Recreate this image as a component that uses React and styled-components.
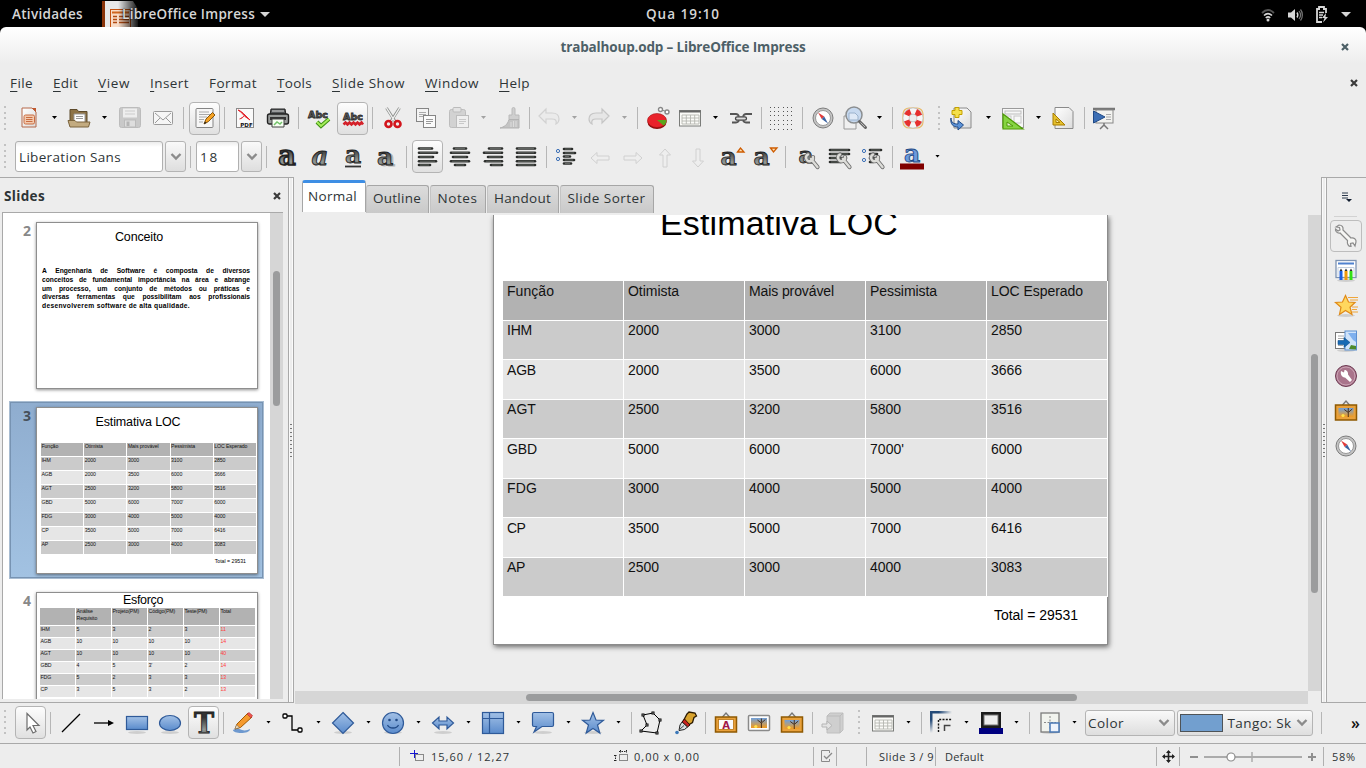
import React, { useLayoutEffect, useRef, useState } from "react";
import styled, { createGlobalStyle, css } from "styled-components";

const UI = '"Open Sans", "Noto Sans", sans-serif';
const DOC = '"Liberation Sans", Arial, sans-serif';
const INK = "#2e3436";
const LINE = "#a9a9a9";

const Global = createGlobalStyle`
  * { box-sizing: border-box; }
  html, body { margin: 0; padding: 0; background: #000; }
  body { font-family: ${UI}; color: ${INK}; overflow: hidden; }
  svg { overflow: visible; }
`;

/* ---------- text tracked to a given width ---------- */
const FitSpan = styled.span`
  display: inline-block;
  white-space: nowrap;
  flex: none;
`;

function Fit({ w, children, className }) {
  const ref = useRef(null);
  const [spacing, setSpacing] = useState(0);
  useLayoutEffect(() => {
    const el = ref.current;
    const n = el.textContent.length;
    setSpacing((w - el.getBoundingClientRect().width) / n);
  }, [w]);
  return (
    <FitSpan ref={ref} className={className} style={{ letterSpacing: `${spacing}px` }}>
      {children}
    </FitSpan>
  );
}

/* ---------- shell ---------- */
const Screen = styled.div`
  width: 1366px;
  height: 768px;
  display: flex;
  flex-direction: column;
  background: #000;
  overflow: hidden;
`;

const TopBar = styled.header`
  height: 27px;
  flex: none;
  display: grid;
  grid-template-columns: 1fr auto 1fr;
  align-items: center;
  color: #d6d6d6;
  font-size: 13.5px;
  font-weight: 600;
  line-height: 29px;
`;
const TopLeft = styled.div`
  display: flex;
  align-items: center;
  padding-left: 12px;
  height: 27px;
`;
const AppIcon = styled.svg`
  margin-left: 19px;
  margin-right: -18px;
  flex: none;
  overflow: hidden;
`;
const AppName = styled(Fit)`
  text-shadow: 0 0 2px #000;
`;
const TopRight = styled.div`
  display: flex;
  justify-content: flex-end;
  align-items: center;
  gap: 12px;
  padding-right: 15px;
`;
const DownMark = styled.i`
  width: 0;
  height: 0;
  border: 5px solid transparent;
  border-top-color: #d6d6d6;
  border-bottom: 0;
  margin-left: ${(p) => p.$ml || 0}px;
`;

const Window = styled.div`
  flex: 1;
  display: flex;
  flex-direction: column;
  min-height: 0;
  background: linear-gradient(#ffffff 0, #ededed 37px);
  border-radius: 6px 6px 0 0;
`;
const TitleBar = styled.div`
  height: 40px;
  flex: none;
  display: grid;
  grid-template-columns: 1fr auto 1fr;
  align-items: center;
  font-size: 13.5px;
  font-weight: 700;
  color: #4d6067;
`;
const CloseCell = styled.div`
  display: flex;
  flex: 1;
  justify-content: flex-end;
  padding-right: ${(p) => p.$pr}px;
`;
const MenuBar = styled.nav`
  height: 33px;
  flex: none;
  display: flex;
  align-items: center;
  padding: 0 0 2px 10px;
  gap: 20px;
  font-size: 13.5px;
  u {
    text-decoration: underline;
    text-underline-offset: 3px;
    text-decoration-thickness: 1px;
  }
`;

/* ---------- toolbars ---------- */
const Toolbar = styled.div`
  height: ${(p) => p.$h}px;
  flex: none;
  display: flex;
  align-items: center;
  padding: 0 0 ${(p) => p.$pb || 0}px 4px;
`;
const Slot = styled.span`
  flex: none;
  width: ${(p) => p.$w || 24}px;
  height: 32px;
  margin-left: ${(p) => p.$g || 0}px;
  display: flex;
  align-items: center;
  justify-content: center;
`;
const PressedSlot = styled(Slot)`
  width: 31px;
  height: 33px;
  border: 1px solid #b4b4b4;
  border-radius: 4px;
  background: linear-gradient(#fdfdfd, #e0e0e0);
`;
const Divider = styled.i`
  flex: none;
  width: 1px;
  height: 22px;
  margin-left: ${(p) => p.$g}px;
  background: #b6b6b6;
`;
const Grip = styled.i`
  flex: none;
  width: 2px;
  height: 25px;
  margin-left: ${(p) => p.$g || 0}px;
  background: repeating-linear-gradient(#c2c2c2 0 2px, transparent 2px 5.6px);
`;
const Caret = styled.i`
  flex: none;
  width: 5px;
  height: 3px;
  margin-left: ${(p) => p.$g + 1}px;
  margin-top: -1px;
  background: ${(p) => (p.$off ? "#a2a2a2" : "#000")};
  clip-path: polygon(0 0, 100% 0, 50% 100%);
`;
const Entry = styled.div`
  flex: none;
  width: ${(p) => p.$w}px;
  height: 31px;
  margin-left: ${(p) => p.$g}px;
  padding-left: 3px;
  padding-top: 1px;
  display: flex;
  align-items: center;
  border: 1px solid #b0b0b0;
  border-radius: 3px;
  background: linear-gradient(#ececec, #fff 5px);
  font-size: 13.5px;
`;
const Combo = styled.div`
  flex: none;
  width: ${(p) => p.$w}px;
  height: ${(p) => p.$h || 31}px;
  margin-left: ${(p) => p.$g}px;
  padding: 0 4px 0 ${(p) => (p.$center ? 4 : 2)}px;
  display: flex;
  align-items: center;
  justify-content: ${(p) => (p.$center ? "center" : "space-between")};
  border: 1px solid #b4b4b4;
  border-radius: 3px;
  background: linear-gradient(#f9f9f9, #dedede);
  font-size: 13.5px;
`;
const Swatch = styled.i`
  width: 43px;
  height: 18px;
  border: 1px solid #4e5357;
  background: #729fcf;
`;
const More = styled.span`
  margin-left: 29px;
  font-size: 16px;
  line-height: 20px;
  font-weight: 600;
  color: #111;
`;

/* ---------- main ---------- */
const Main = styled.div`
  flex: 1;
  display: flex;
  min-height: 0;
`;
const SlidePanel = styled.aside`
  width: 294px;
  height: 526px;
  display: flex;
  border-top: 1px solid ${LINE};
  border-bottom: 1px solid ${LINE};
`;
const PanelBody = styled.div`
  width: 288px;
  display: flex;
  flex-direction: column;
`;
const PanelHead = styled.div`
  height: 34px;
  display: flex;
  align-items: center;
  justify-content: space-between;
  padding: 2px 7px 0 4px;
  font-size: 13.5px;
  font-weight: 700;
`;
const ListFrame = styled.div`
  width: 281px;
  height: 487px;
  margin-left: 2px;
  display: flex;
  overflow: hidden;
  border-top: 1px solid ${LINE};
  border-left: 1px solid ${LINE};
  background: #fff;
`;
const List = styled.div`
  width: 267px;
  padding: 3px 0 0 6px;
  display: flex;
  flex-direction: column;
  gap: 7px;
  overflow: hidden;
`;
const Track = styled.div`
  width: 13px;
  flex: none;
  padding: ${(p) => p.$top}px 3px 0;
  background: #d6d6d6;
`;
const Thumb = styled.i`
  display: block;
  width: ${(p) => p.$w || 7}px;
  height: ${(p) => p.$h || 7}px;
  border-radius: 4px;
  background: #9b9c9d;
`;
const Splitter = styled.div`
  width: 6px;
  display: flex;
  align-items: center;
  border-left: 1px solid ${LINE};
  border-right: 1px solid ${LINE};
  background: linear-gradient(90deg, #fafafa 1px, #ededed 1px 3px, #fafafa 3px);
`;
const SplitDots = styled.i`
  width: 2px;
  height: 33px;
  margin-left: 1px;
  background: repeating-linear-gradient(#777 0 1px, transparent 1px 4px);
`;

const Item = styled.div`
  flex: none;
  width: 255px;
  height: 178px;
  display: flex;
  border: 2px solid transparent;
  padding-top: 4px;
  ${(p) =>
    p.$on &&
    css`
      border-color: #7793b2;
      background: linear-gradient(#8fadcf, #a2c2e2);
      outline: 1px solid #a9bdd2;
      outline-offset: -1px;
    `}
`;
const Num = styled.div`
  width: 25px;
  padding-right: 5px;
  text-align: right;
  font-size: 14px;
  line-height: 18px;
  font-weight: 700;
  color: ${(p) => (p.$on ? "#46505a" : "#888")};
`;
const Mini = styled.div`
  width: 222px;
  height: 167px;
  flex: none;
  background: #fff;
  border: 1px solid #8e8e8e;
  box-shadow: 0 1px 3px rgba(0, 0, 0, 0.45);
  font-family: ${DOC};
  color: #000;
  display: flex;
  flex-direction: column;
`;
const MiniTitle = styled.div`
  display: flex;
  justify-content: center;
  padding-right: ${(p) => p.$pr}px;
  font-size: 12.5px;
  line-height: 16px;
  margin-top: ${(p) => p.$mt}px;
  height: ${(p) => p.$h}px;
`;
const MiniText = styled.div`
  padding: 0 7px 0 5px;
  font-size: 6.7px;
  font-weight: 700;
  line-height: 8.75px;
  padding-top: 1px;
`;
const JustLine = styled.div`
  white-space: nowrap;
  text-align: justify;
  text-align-last: ${(p) => (p.$last ? "left" : "justify")};
`;
const MiniGrid = styled.div`
  display: grid;
  grid-template-columns: repeat(${(p) => p.$n}, ${(p) => p.$cw}px);
  grid-auto-rows: ${(p) => p.$rh}px;
  grid-template-rows: ${(p) => p.$first}px;
  margin-left: ${(p) => p.$ml}px;
`;
const MiniCell = styled.div`
  font-size: 5.2px;
  line-height: 7px;
  padding-left: 0.5px;
  letter-spacing: -0.02em;
  white-space: pre;
  border-right: 1px solid #fff;
  border-bottom: 1px solid #fff;
  background: ${(p) => p.$bg};
  color: ${(p) => (p.$red ? "#ff3b3b" : "#111")};
`;
const MiniTotal = styled.div`
  font-size: 5.2px;
  line-height: 7px;
  padding: 3px 11px 0 0;
  text-align: right;
`;

const Center = styled.section`
  width: 1027px;
  padding-left: 1px;
  display: flex;
  flex-direction: column;
`;
const Tabs = styled.div`
  height: 38px;
  flex: none;
  padding: 3px 0 2px 7px;
  display: flex;
  align-items: flex-end;
  gap: 1px;
`;
const Tab = styled.div`
  width: ${(p) => p.$w}px;
  height: 28px;
  padding: 0 1px 3px 0;
  display: flex;
  align-items: center;
  justify-content: center;
  border: 1px solid #a6a6a6;
  border-left-color: #c4c4c4;
  border-bottom: 0;
  border-radius: 3px 3px 0 0;
  background: linear-gradient(#dcdcdc, #c9c9c9);
  font-size: 13.5px;
  ${(p) =>
    p.$on &&
    css`
      height: 32px;
      margin-bottom: 1px;
      margin-right: -1px;
      padding-right: 3px;
      background: #fff;
      border-top: 3px solid #3e8ee4;
      border-left-color: #a6a6a6;
    `}
`;
const Work = styled.div`
  display: flex;
  height: 476px;
`;
const Canvas = styled.div`
  width: 1013px;
  padding-left: 198px;
  overflow: hidden;
`;
const Slide = styled.article`
  display: flow-root;
  width: 615px;
  height: 430px;
  background: #fff;
  border: 1px solid #8c8c8c;
  border-top: 0;
  box-shadow: 1px 2px 5px rgba(0, 0, 0, 0.55);
  font-family: ${DOC};
  color: #000;
`;
const SlideTitle = styled.h1`
  margin: -12px 0 0;
  height: 78px;
  padding-left: 166px;
  font-size: 34px;
  font-weight: 400;
  line-height: 40px;
`;
const SlideGrid = styled.div`
  width: 605px;
  margin-left: 9px;
  display: grid;
  grid-template-columns: repeat(5, 121px);
  grid-template-rows: 40px 39px 40px 39px 40px 39px 40px 39px;
`;
const Cell = styled.div`
  padding: ${(p) => (p.$tight ? 1 : 2)}px 0 0 4px;
  font-size: 14px;
  line-height: 17px;
  color: #111;
  background: ${(p) => p.$bg};
  border-right: 1px solid #fff;
  border-bottom: 1px solid #fff;
`;
const SlideTotal = styled.div`
  display: flex;
  justify-content: flex-end;
  padding: 10px 29px 0 0;
  font-size: 14px;
  line-height: 17px;
`;
const HTrack = styled.div`
  width: 1013px;
  height: 13px;
  padding: 3px 0 0 231px;
  background: #d6d6d6;
`;

const SideBar = styled.aside`
  width: 45px;
  height: 526px;
  display: flex;
  border-top: 1px solid ${LINE};
  border-bottom: 1px solid ${LINE};
`;
const Deck = styled.div`
  flex: 1;
  display: flex;
  flex-direction: column;
  align-items: center;
  padding: 8px 2px 0 0;
`;
const DeckSlot = styled.span`
  width: 32px;
  height: ${(p) => p.$h || 35}px;
  display: flex;
  align-items: center;
  justify-content: center;
  ${(p) =>
    p.$on &&
    css`
      border: 1px solid #bdbdbd;
      border-radius: 4px;
      margin-bottom: 1px;
    `}
`;
const DeckRule = styled.i`
  width: 23px;
  height: 1px;
  background: #d2d2d2;
  margin: 9px 0 3px;
`;

const Status = styled.footer`
  height: 25px;
  flex: none;
  display: flex;
  align-items: center;
  border-top: 1px solid ${LINE};
  font-size: 11px;
`;
const Field = styled.div`
  height: ${(p) => (p.$plain ? 24 : 19)}px;
  width: ${(p) => p.$w}px;
  flex: none;
  display: flex;
  align-items: center;
  padding-top: 1px;
  padding-left: ${(p) => p.$pl || 0}px;
  gap: ${(p) => p.$gap || 0}px;
  border-right: ${(p) => (p.$plain ? "0" : "1px solid #b0b0b0")};
`;

/* ---------- icons ---------- */
const Svg = ({ s = 24, children, h }) => (
  <svg width={s} height={h || s} viewBox={`0 0 ${s} ${h || s}`} fill="none">
    {children}
  </svg>
);

const HiddenSvg = styled.svg`
  position: absolute;
`;
const Defs = () => (
  <HiddenSvg width="0" height="0">
    <defs>
      <linearGradient id="blue" x1="0" y1="0" x2="0" y2="1">
        <stop offset="0" stopColor="#a3c1e6" />
        <stop offset="1" stopColor="#5a8bcc" />
      </linearGradient>
      <linearGradient id="ink" x1="0" y1="0" x2="0" y2="1">
        <stop offset="0.3" stopColor="#333" />
        <stop offset="0.7" stopColor="#949996" />
        <stop offset="1" stopColor="#333" />
      </linearGradient>
      <linearGradient id="sunset" x1="0" y1="0" x2="0" y2="1">
        <stop offset="0" stopColor="#6fa0dc" />
        <stop offset="1" stopColor="#f59b1c" />
      </linearGradient>
      <linearGradient id="page" x1="0" y1="0" x2="1" y2="1">
        <stop offset="0" stopColor="#fff" />
        <stop offset="1" stopColor="#dcdcdc" />
      </linearGradient>
      <linearGradient id="navyAcross" x1="0" y1="0" x2="1" y2="0">
        <stop offset="0.4" stopColor="#244a78" />
        <stop offset="1" stopColor="#244a78" stopOpacity="0" />
      </linearGradient>
      <linearGradient id="navyDown" x1="0" y1="0" x2="0" y2="1">
        <stop offset="0.4" stopColor="#244a78" />
        <stop offset="1" stopColor="#244a78" stopOpacity="0" />
      </linearGradient>
    </defs>
  </HiddenSvg>
);

const blueShape = { fill: "url(#blue)", stroke: "#2f5a99", strokeWidth: 1.2 };
const shade = <ellipse cx="12" cy="21.5" rx="9" ry="1.5" fill="#000" opacity=".13" />;

const Page = ({ x = 4, y = 2, w = 16, h = 20, stroke = "#8a8a8a" }) => (
  <path d={`M${x} ${y}h${w - 4}l4 4v${h - 4}h${-w}z`} fill="url(#page)" stroke={stroke} />
);
const Wrench = () => (
  <g strokeLinecap="round">
    <path d="M15 14l6.500 8M12 9.500a3.500 3.500 0 1 0 5 2.500" stroke="#6f6f6f" strokeWidth="4.200" />
    <path d="M15 14l6.500 8M12 9.500a3.500 3.500 0 1 0 5 2.500" stroke="#dcdcd8" strokeWidth="2.400" />
  </g>
);
const Letter = ({ children, fill = "url(#ink)", stroke = "#222", x = 12, y = 20, size = 26, ...rest }) => (
  <text x={x} y={y} textAnchor="middle" fontFamily="DejaVu Serif" fontWeight="700" fontSize={size} fill={fill} stroke={stroke} strokeWidth=".9" {...rest}>
    {children}
  </text>
);

const rows = (list) => list.map(([x1, x2, y]) => (
  <g key={y}>
    <path d={`M${x1} ${y}H${x2}`} stroke="#2c2e2c" strokeWidth="2.600" strokeLinecap="round" />
    <path d={`M${x1 + 1} ${y}H${x2 - 1}`} stroke="#858a85" strokeWidth=".6" />
  </g>
));

const Tree = ({ x, y, w, h }) => (
  <g>
    <rect x={x} y={y} width={w} height={h} fill="url(#sunset)" />
    <circle cx={x + w * 0.3} cy={y + h - 1.5} r="1.600" fill="#ffe14a" />
    <path d={`M${x + w * 0.65} ${y + h}v${-h * 0.5}l-4-3m4 3l4-3.500m-4 3v-4`} stroke="#3c2412" strokeWidth=".9" />
  </g>
);
const hook = <path d="M8.500 6L12 2l3.500 4" stroke="#777" strokeWidth="1.300" />;

const icons = {
  newDoc: <><Page x={5} y={2} w={14} h={19} stroke="#b5694a" /><path d="M15 2h4v4z" fill="#c0582e" /><rect x="7" y="9" width="10.500" height="9" rx="1.500" fill="#f3c9ae" stroke="#c96c40" /><path d="M9 11.500h6.500M9 13.500h6.500M9 15.500h6.500" stroke="#c96c40" /></>,
  open: <><path d="M3 19V3.500h7l1.500 2H20V19z" fill="#8d7347" stroke="#5d4a2b" /><path d="M7 8h11v10H7z" fill="#fff" stroke="#999" /><path d="M9 10.500h7M9 12.500h7" stroke="#999" /><path d="M1 14.500h7l1.500 1.500H23l-1.500 5H3z" fill="#c3ab80" stroke="#7a633c" /></>,
  save: <><rect x="1.500" y="1.500" width="21" height="20" rx="2" fill="#c9c9c9" stroke="#bcbcbc" /><rect x="5" y="2.500" width="14" height="9" fill="#eee" /><path d="M7 5h10M7 8h10" stroke="#ccc" /><rect x="6.500" y="14" width="11" height="7" fill="#dedede" stroke="#bbb" /><rect x="8.500" y="15.500" width="3" height="4.500" fill="#b5b5b5" /></>,
  mail: <><rect x="2.500" y="5.500" width="19" height="13" rx="1" fill="#f6f6f6" stroke="#9b9b9b" /><path d="M4 7l8 7 8-7M4 17l5-5M20 17l-5-5" stroke="#999" /></>,
  edit: <><rect x="3" y="2.500" width="17" height="19" rx="1" fill="#f7f7f7" stroke="#858585" /><path d="M6 6h10M6 8.500h11M6 11h8M6 13.500h5M6 16h4" stroke="#a9a9a9" /><path d="M11 18l2-5 6.500-6.500 2.500 2.500-6.500 6.500z" fill="#f6a223" stroke="#7a4a00" strokeWidth=".9" /><path d="M11 18l1-2.500 1.500 1.500z" fill="#222" /></>,
  pdf: <><rect x="3.500" y="2.500" width="17" height="19" fill="#fafafa" stroke="#8a8a8a" /><path d="M5 4c3 1 5 3 7 5l5 5-5-3.500c-1-1-3-4-7-6.500zM11.500 9.500c-1.500 2-3 3-5 3.500" fill="#e3262e" stroke="#e3262e" /><text x="13.500" y="20.500" textAnchor="middle" fontFamily="DejaVu Sans" fontWeight="700" fontSize="5.5" fill="#111">PDF</text></>,
  print: <><path d="M5 3h14l1 6H4z" fill="#55585a" stroke="#222" /><rect x="1.500" y="8" width="21" height="10" rx="2" fill="#9a9d9c" stroke="#222" strokeWidth="1.400" /><path d="M6 5h12" stroke="#ddd" /><rect x="4" y="11" width="16" height="3" fill="#333" /><path d="M6 13h12v8H6z" fill="#f7fff3" stroke="#444" /><path d="M8 19l3-3 3 2 2-2" stroke="#73c36a" strokeWidth="1.500" /></>,
  spell: <><text x="11" y="12" textAnchor="middle" fontFamily="DejaVu Sans" fontWeight="700" fontSize="9.5" fill="#666" stroke="#2a2a2a" strokeWidth=".8">Abc</text><path d="M10 16l4 4 8-7" stroke="#3f8f14" strokeWidth="4" /><path d="M10 16l4 4 8-7" stroke="#a5ee5a" strokeWidth="2" /></>,
  autoSpell: <><text x="12" y="14" textAnchor="middle" fontFamily="DejaVu Sans" fontWeight="700" fontSize="9.5" fill="#666" stroke="#2a2a2a" strokeWidth=".8">Abc</text><path d="M2.500 18.500l2-2 2 2 2-2 2 2 2-2 2 2 2-2 2 2 2-2 1.500 2" stroke="#d4222a" strokeWidth="2.600" /></>,
  cut: <><path d="M5.500 2l9 14M18.500 2l-9 14" stroke="#8c8f8c" strokeWidth="2.800" /><path d="M5.500 2l8 13M18.500 2l-8 13" stroke="#f2f2f2" strokeWidth="1.400" /><circle cx="7.500" cy="18" r="3" stroke="#d2151c" strokeWidth="2.600" /><circle cx="16.500" cy="18" r="3" stroke="#d2151c" strokeWidth="2.600" /></>,
  copy: <><rect x="2.500" y="2.500" width="12" height="13" fill="#f4f4f4" stroke="#858585" /><path d="M5 6.500h7M5 8.500h7M5 10.500h5" stroke="#aaa" /><rect x="9.500" y="9.500" width="12" height="12" fill="#fbfbfb" stroke="#858585" /><path d="M12 13.500h7M12 15.500h7M12 17.500h5" stroke="#999" /></>,
  paste: <><rect x="2.500" y="3.500" width="16" height="18" rx="2" fill="#d2d2d2" stroke="#bdbdbd" /><rect x="6" y="1.500" width="8" height="4.500" rx="1" fill="#e3e3e3" stroke="#bbb" /><rect x="9.500" y="9.500" width="12" height="12" fill="#efefef" stroke="#bdbdbd" /><path d="M12 13.500h7M12 15.500h7M12 17.500h5" stroke="#c8c8c8" /></>,
  brush: <><path d="M14 9V3q0-1.500 1.500-1.500T17 3v6h4v4.500h-10V9z" fill="#cfcfcf" stroke="#bababa" /><path d="M11 13.500h10v8.500H2c4-1 7.500-3 9-8.500z" fill="#c4c4c4" stroke="#b3b3b3" /><path d="M13 16v5M15.500 15v6M18 15v6" stroke="#dcdcdc" /></>,
  undo: <path d="M2 10l7-7v4h6c5 0 7 3 7 6 0 2-1 4-3 5 1-4-1-5-4-5H9v4z" fill="#ebebeb" stroke="#d2d2d2" strokeWidth="1.200" />,
  redo: <path d="M22 10l-7-7v4H9c-5 0-7 3-7 6 0 2 1 4 3 5-1-4 1-5 4-5h6v4z" fill="#e6e6e6" stroke="#c6c6c6" strokeWidth="1.200" />,
  chart: <><ellipse cx="11" cy="16" rx="9.500" ry="7" fill="#8d0d0d" /><ellipse cx="11" cy="14.500" rx="9.500" ry="7" fill="#e9232b" stroke="#a31212" strokeWidth=".6" /><path d="M11 14h9.500c0 3-1.500 4.500-3 5.500z" fill="#5aa51c" /><circle cx="14.500" cy="3.500" r="2" stroke="#888" strokeWidth="1.400" fill="#fff" /><circle cx="21" cy="6" r="2" stroke="#888" strokeWidth="1.400" fill="#fff" /><path d="M16 4l4 1.500" stroke="#888" /></>,
  table: <><rect x="1.500" y="4.500" width="21" height="15.500" fill="#fbfbf8" stroke="#7b7d7a" /><path d="M1.500 5.500h21" stroke="#666" strokeWidth="2" /><path d="M4 9h17M4 12h17M4 15h17M4 18h17M4 9v9M8.300 9v9M12.500 9v9M16.700 9v9M21 9v9" stroke="#b4b6b0" strokeWidth=".9" /></>,
  link: <><path d="M1 8h6q2 0 3 2.500M23 8h-6q-2 0-3 2.500M3 16.500h4q2 0 3-2M21 16.500h-4q-2 0-3-2" stroke="#555" strokeWidth="1.800" /><rect x="6.500" y="10.800" width="11" height="3.400" rx="1.700" fill="#ddd" stroke="#444" strokeWidth="1.300" /></>,
  grid: <>{[1, 5, 9, 14, 18, 22].map((x) => [1, 5, 9, 14, 18, 23].map((y) => <rect key={x + "-" + y} x={x} y={y} width="1" height="1" fill="#555" />))}</>,
  compass: <><circle cx="12" cy="12" r="10" fill="#c4c4c4" stroke="#7d7d7d" /><circle cx="12" cy="12" r="7.500" fill="#fff" stroke="#999" /><path d="M7 6.500l6.200 4-2.500 2.500z" fill="#e13b3b" /><path d="M17 17.500l-6.300-4.500 2.500-2.500z" fill="#3b62a0" /></>,
  zoom: <><path d="M1 10h12v13H1z" fill="#f0f0f0" stroke="#999" /><circle cx="11" cy="9" r="8" fill="#c7d9ef" stroke="#8b8e90" strokeWidth="1.500" /><path d="M6 7h6l3 3v4H6z" fill="#dfe9f6" stroke="#9bb2cc" /><path d="M16.500 15.500l6 6" stroke="#666" strokeWidth="3" strokeLinecap="round" /><path d="M17.500 16.500l4.500 4.500" stroke="#bbb" strokeWidth="1" /></>,
  help: <><rect x="2" y="2" width="20" height="20" rx="6" stroke="#e9bb6b" strokeWidth="1.200" /><circle cx="12" cy="12" r="7" stroke="#b9b9b9" strokeWidth="6.800" /><circle cx="12" cy="12" r="7" stroke="#f6f6f6" strokeWidth="5.500" /><circle cx="12" cy="12" r="7" stroke="#e6302e" strokeWidth="5.500" strokeDasharray="5.500 5.500" strokeDashoffset="-2.750" /></>,
  newSlide: <><Page x={5} y={2} w={17} h={20} /><path d="M6 1.500h4v3h3v4h-3v3H6v-3H3v-4h3z" fill="#f5e04b" stroke="#c4a000" /><path d="M2 12c0 5 3 6 7 6v-3.500l5.500 4.500L9 24v-3C4 21 1 18 2 12z" fill="#5c92d6" stroke="#204a87" /></>,
  layout: <><rect x="1.500" y="2.500" width="21" height="19" fill="#f7f7f7" stroke="#9a9a9a" /><rect x="4" y="5" width="16" height="3" stroke="#bdbdbd" /><rect x="4" y="10" width="6" height="7" stroke="#c6c6c6" /><rect x="13" y="10" width="7" height="7" stroke="#c6c6c6" /><path d="M2 8v15h20z" fill="#86d442" stroke="#4e9a06" strokeWidth="1.200" /><path d="M6 16v4h6z" fill="#e5f3d6" stroke="#4e9a06" /></>,
  design: <><Page x={4} y={1.500} w={18} h={21} /><path d="M2 7v12h12z" fill="#e5c02e" stroke="#a67c00" /><path d="M5 13v3.500h4z" fill="#fff3b5" stroke="#a67c00" /></>,
  present: <><path d="M1 3h22" stroke="#777" strokeWidth="2.500" /><rect x="4" y="4" width="17" height="13" fill="#f3f3f0" stroke="#888" /><path d="M14 8.500h5M14 11h5M14 13.500h5" stroke="#aaa" /><path d="M1.500 5v12L13 11z" fill="#3d6fb5" stroke="#204a87" /><path d="M12 17v2l-4 4M12 19l4 4" stroke="#777" strokeWidth="1.500" /></>,
  bold: <Letter size={27} strokeWidth="1.600">a</Letter>,
  italic: <Letter fontStyle="italic">a</Letter>,
  underline: <><Letter y={18} size={25}>a</Letter><path d="M4 21.500h16" stroke="#333" strokeWidth="1.800" /></>,
  shadow: <><Letter x={14} y={21} size={25} fill="#b5b5b5" stroke="#b5b5b5">a</Letter><Letter size={25}>a</Letter></>,
  left: <>{rows([[3, 16, 3.500], [3, 21, 7.800], [3, 17, 12], [3, 20, 16.200], [3, 14, 20]])}</>,
  center: <>{rows([[6, 18, 3.500], [3, 21, 7.800], [5, 19, 12], [3, 21, 16.200], [7, 17, 20]])}</>,
  right: <>{rows([[8, 21, 3.500], [3, 21, 7.800], [7, 21, 12], [4, 21, 16.200], [10, 21, 20]])}</>,
  justify: <>{rows([[3, 21, 3.500], [3, 21, 7.800], [3, 21, 12], [3, 21, 16.200], [3, 21, 20]])}</>,
  bullets: <><circle cx="4" cy="6" r="1.600" stroke="#3b6fb6" /><circle cx="4" cy="14" r="1.600" stroke="#3b6fb6" />{rows([[10, 18, 4], [10, 21, 8], [10, 16, 11.500], [10, 20, 15], [10, 17, 18.500]])}</>,
  aLeft: <path d="M3 13l6-5.500V11h12v4H9v3.500z" fill="#eee" stroke="#d0d0d0" />,
  aRight: <path d="M21 13l-6-5.500V11H3v4h12v3.500z" fill="#eee" stroke="#d0d0d0" />,
  aUp: <path d="M12 4l5.500 6H14v12h-4V10H6.500z" fill="#eee" stroke="#d0d0d0" />,
  aDown: <path d="M12 22l5.500-6H14V4h-4v12H6.500z" fill="#eee" stroke="#d0d0d0" />,
  grow: <><Letter x={8.500} size={25}>a</Letter><path d="M17.500 7l3-4L24 7z" fill="#fce0b5" stroke="#ce5c00" strokeWidth="1.300" /></>,
  shrink: <><Letter x={8.500} size={25}>a</Letter><path d="M17.500 3l3 4L24 3z" fill="#fce0b5" stroke="#ce5c00" strokeWidth="1.300" /></>,
  charFmt: <><Letter x={10} y={18} size={23}>a</Letter><Wrench /></>,
  paraFmt: <>{rows([[2, 21, 5], [2, 21, 9], [2, 18, 13], [2, 13, 17]])}<Wrench /></>,
  bulletFmt: <><circle cx="3" cy="6" r="1.600" stroke="#3b6fb6" /><circle cx="3" cy="15" r="1.600" stroke="#3b6fb6" />{rows([[9, 20, 5], [9, 16, 9], [9, 16, 13], [9, 12, 17]])}<Wrench /></>,
  fontColor: <><Letter fill="#6d9bdc" stroke="#1f4a86" y={17} size={25}>a</Letter><rect x="0" y="18.500" width="24" height="6" fill="#800000" /></>,

  select: <path d="M8 2.500l12 12h-6l3 6-3 1.500-3-6-3 3z" fill="#fff" stroke="#6d6d6d" strokeWidth="1.200" />,
  line: <path d="M3 21L21 3" stroke="#000" strokeWidth="1.300" />,
  arrowLine: <><path d="M2 12h16" stroke="#000" strokeWidth="1.300" /><path d="M16 9l6 3-6 3z" fill="#000" /></>,
  rect: <>{shade}<rect x="1.500" y="5.500" width="21" height="13" {...blueShape} /></>,
  ellipse: <>{shade}<ellipse cx="12" cy="12" rx="10.500" ry="7.500" {...blueShape} /></>,
  text: <Letter size={27} y={22}>T</Letter>,
  pencil: <><path d="M2 19c3-2 6-1 9 0s6 0 8-1c0 3-5 4-9 4s-8-1-8-3z" fill="#4d83c7" opacity=".8" /><path d="M4 18l2-5L17 2l4 4L9.500 16.500z" fill="#f59a2d" stroke="#a35a00" /><path d="M16 3l2-1.500 3.500 3L20 7z" fill="#ef5350" stroke="#a33" strokeWidth=".6" /><path d="M4 18l1.500-4 3 2.500z" fill="#fbe3b9" stroke="#666" strokeWidth=".5" /></>,
  connector: <><path d="M6 5h5v14h6" stroke="#000" strokeWidth="1.300" /><rect x="2" y="3" width="4" height="4" rx="1" fill="#fff" stroke="#000" strokeWidth="1.300" /><rect x="17" y="17" width="4" height="4" rx="1" fill="#fff" stroke="#000" strokeWidth="1.300" /></>,
  diamond: <>{shade}<path d="M12 1.500L22.500 12 12 22.500 1.500 12z" {...blueShape} /></>,
  smile: <>{shade}<circle cx="12" cy="12" r="10.500" {...blueShape} /><circle cx="8.500" cy="9" r="1.300" fill="#204a87" /><circle cx="15.500" cy="9" r="1.300" fill="#204a87" /><path d="M6.500 14c2 4 9 4 11 0" stroke="#204a87" strokeWidth="1.300" /></>,
  hArrow: <>{shade}<path d="M1.500 12L8 6v4h8V6l6.500 6-6.500 6v-4H8v4z" {...blueShape} /></>,
  flow: <><rect x="1.500" y="1.500" width="21" height="21" {...blueShape} /><path d="M8.500 2v20M2 7.500h20" stroke="#2f5a99" strokeWidth="1.200" /></>,
  callout: <>{shade}<path d="M3 1.500h18q1.500 0 1.500 1.500v11q0 1.500-1.500 1.500H11L3 21l2.500-5.500H3Q1.500 15.500 1.500 14V3Q1.500 1.500 3 1.500z" {...blueShape} /></>,
  star: <>{shade}<path d="M12 1.500l3 7.500 7.500.3-6 4.700 2.300 8-6.800-4.500L5.200 22l2.300-8-6-4.700L9 9z" {...blueShape} /></>,
  polygon: <><path d="M4 4l10-2 7 7-3 13-16-2 6-6z" stroke="#000" /><g fill="#fff" stroke="#000"><rect x="3" y="3" width="2" height="2" /><rect x="13" y="1" width="2" height="2" /><rect x="20" y="8" width="2" height="2" /><rect x="17" y="21" width="2" height="2" /><rect x="1" y="19" width="2" height="2" /><rect x="7" y="13" width="2" height="2" /></g></>,
  glue: <><path d="M13 3l2-2 6 1 1.500 3-2.500 1.500-1.500 5-5 3-4.500-4z" fill="#d9a32e" stroke="#2b1a00" strokeWidth="1.300" /><path d="M10.500 8l5.500 6-2.500 2-5.500-5z" fill="#c5221f" stroke="#2b0a00" /><path d="M8 11l5.500 5-3 2.500-5.500 1 1-5.500z" fill="#d7dde0" stroke="#222" /><path d="M6 18l4-3.500" stroke="#222" strokeWidth=".8" /><circle cx="3" cy="21.500" r="1.800" fill="#3b78b8" /></>,
  fontwork: <>{hook}<rect x="1.500" y="6" width="21" height="15" fill="#e9a13b" stroke="#8f5902" strokeWidth="1.500" /><rect x="4.500" y="8.500" width="15" height="10" fill="#fbfbfb" stroke="#b97413" strokeWidth=".8" /><text x="12" y="17.500" textAnchor="middle" fontFamily="DejaVu Sans" fontWeight="700" fontSize="10" fill="#a01848">A</text></>,
  image: <><rect x="1.500" y="4.500" width="21" height="15" rx="1" fill="#fff" stroke="#8a8a8a" strokeWidth="1.500" /><Tree x={4} y={7} w={16} h={10} /></>,
  gallery: <>{hook}<rect x="1.500" y="6" width="21" height="15" fill="#e9a13b" stroke="#8f5902" strokeWidth="1.500" /><Tree x={4.500} y={9} w={15} h={9} /></>,
  extrude: <><path d="M6 5l3-3h13v17l-3 3H6z" fill="#cfcfcf" stroke="#bfbfbf" /><path d="M6 5h13v17M19 5l3-3" stroke="#bbb" /><path d="M1 13h5v-3l5 4.500L6 19v-3H1z" fill="#e3e3e3" stroke="#b5b5b5" /></>,
  borders: <><rect x="0" y="0" width="22" height="2.500" fill="url(#navyAcross)" /><rect x="0" y="0" width="2.500" height="22" fill="url(#navyDown)" /><path d="M8.500 21V8.500h13" stroke="#111" strokeWidth="1.400" strokeDasharray="2 1.300" /><path d="M14.500 20v-5.500h6" stroke="#444" strokeWidth="1.500" /></>,
  lineColor: <><rect x="2" y="1" width="20" height="16" fill="#1b1b1b" /><rect x="5" y="4" width="14" height="10" fill="#ededed" stroke="#777" /><rect x="0" y="17" width="24" height="6" fill="#000080" /></>,
  borderStyle: <>{shade}<rect x="3" y="2" width="18" height="19" fill="#f1f3ee" stroke="#7c7c7c" strokeWidth="1.300" /><path d="M12 5v13M6 11.500h12" stroke="#888" strokeDasharray="2 1.500" /><rect x="12" y="12" width="9" height="9" fill="#eef3fb" stroke="#4a78b5" strokeWidth="1.500" /></>,

  wrench: <path d="M2 3l3-2c3 0 4.500 2 4 5l8 8c3-.5 5.500 1 5 4l-1 4-2-3-2.500.5.500 3c-3 0-4-3-3.500-6L6 9C3 9.500 1 7 1.500 5l2.500 2 2-1-.5-2.500z" fill="#f6f6f4" stroke="#8b8b8b" strokeWidth="1.200" />,
  custom: <>{shade}<rect x="2" y="1.500" width="20" height="17" fill="#fff" stroke="#7d93b2" strokeWidth="1.300" /><rect x="4" y="3.500" width="16" height="2" fill="#4f81cf" /><path d="M4 17V8.500h16V17" stroke="#c3d0e0" /><rect x="5.500" y="12" width="3" height="9" fill="#1c5fe0" /><rect x="10.500" y="12" width="3" height="9" fill="#f09a0a" /><rect x="15.500" y="12" width="3" height="9" fill="#32e016" /><path d="M5.500 12l1.500-2.500 1.500 2.500zM10.500 12l1.500-2.500 1.500 2.500zM15.500 12l1.500-2.500 1.500 2.500z" fill="#333" /></>,
  favorite: <>{shade}<path d="M14 3.500h10M16 6h8M18 13h6M18 15.500h5M18 18h6" stroke="#f0a63a" /><path d="M11.500 1.500l3 6.500 6.500.5-5 4.700 2 7.300-6.500-4-6 4 1.500-7.300-5.500-4.700 7-.5z" fill="#ffd75e" stroke="#e08a18" strokeWidth="1.200" /></>,
  transition: <>{shade}<rect x="1.500" y="3.500" width="12" height="16" fill="#fff" stroke="#777" /><path d="M4 7h6M4 9.500h6M4 16.500h5" stroke="#aaa" /><rect x="11" y="2" width="11.500" height="19" fill="#cfe3fa" stroke="#5d8fd0" /><path d="M14 4h8v9l-3-2z" fill="#7fb0ee" /><path d="M15 20l2-4 5 1v3.500z" fill="#4d8a2c" /><path d="M4 11.500h6V8.500l6 5-6 5v-3H4z" fill="#1769b3" stroke="#0d4f8c" strokeWidth=".6" /></>,
  tools: <><circle cx="12" cy="12" r="10.500" fill="#a9748b" stroke="#6d3a52" /><circle cx="12" cy="12" r="9" stroke="#d3b0bf" strokeWidth=".8" /><path d="M7 7l3 1.500.5-2.500c2 0 4 2 3.500 4.500l4 5.500-2 2-5-4.500C8.500 13.500 6 11 7 7z" fill="#fff" /></>,
};

const Icon = ({ name, g }) => (
  <Slot $g={g}>
    <Svg>{icons[name]}</Svg>
  </Slot>
);
const Pressed = ({ name, g }) => (
  <PressedSlot $g={g}>
    <Svg>{icons[name]}</Svg>
  </PressedSlot>
);
const Tools = ({ items }) =>
  items.map(([kind, g, v], i) => {
    if (kind === "|") return <Divider key={i} $g={g} />;
    if (kind === ":") return <Grip key={i} $g={g} />;
    if (kind === "v") return <Caret key={i} $g={g} $off={v} />;
    if (v === "on") return <Pressed key={i} name={kind} g={g} />;
    return <Icon key={i} name={kind} g={g} />;
  });

const Chevron = () => (
  <Svg s={12} h={9}>
    <path d="M1.500 2L6 6.500 10.500 2" stroke="#8b8b8b" strokeWidth="2.400" />
  </Svg>
);
const Cross = ({ color, s = 8, w = 2.2 }) => (
  <svg width={s} height={s} viewBox="0 0 8 8">
    <path d="M1 1l6 6M7 1L1 7" stroke={color} strokeWidth={w} />
  </svg>
);

/* ---------- data ---------- */
const menus = [
  ["", "F", "ile", 23], ["", "E", "dit", 25], ["", "V", "iew", 32], ["", "I", "nsert", 39],
  ["F", "o", "rmat", 48], ["", "T", "ools", 35], ["", "S", "lide Show", 73], ["", "W", "indow", 54], ["", "H", "elp", 31],
];
const standard = [
  [":", 0], ["newDoc", 11], ["v", 10], ["open", 10], ["v", 10], ["save", 11], ["mail", 9], ["|", 8],
  ["edit", 5, "on"], ["|", 4], ["pdf", 8], ["print", 9], ["|", 8], ["spell", 8], ["autoSpell", 6, "on"], ["|", 4],
  ["cut", 8], ["copy", 9], ["paste", 9], ["v", 9, true], ["brush", 12], ["|", 7], ["undo", 7], ["v", 10, true],
  ["redo", 10], ["v", 10, true], ["|", 10], ["chart", 8], ["table", 8], ["v", 10], ["link", 11], ["|", 8],
  ["grid", 7], ["|", 9], ["compass", 8], ["zoom", 8], ["v", 9], ["|", 10], ["help", 8], [":", 13],
  ["newSlide", 9], ["v", 12], ["layout", 10], ["v", 10], ["design", 10], ["|", 9], ["present", 7],
];
const formatting = [
  ["|", 4], ["bold", 8], ["italic", 9], ["underline", 9], ["shadow", 8], ["|", 9], ["left", 5, "on"], ["center", 5],
  ["right", 9], ["justify", 9], ["|", 8], ["bullets", 7], ["aLeft", 10], ["aRight", 9], ["aUp", 8], ["aDown", 9],
  ["grow", 10], ["shrink", 9], ["|", 8], ["charFmt", 10], ["paraFmt", 8], ["bulletFmt", 9], ["|", 7], ["fontColor", 7], ["v", 10],
];
const drawing = [
  [":", 0], ["select", 9, "on"], ["|", 4], ["line", 8], ["arrowLine", 9], ["rect", 9], ["ellipse", 9], ["text", 6, "on"],
  ["|", 4], ["pencil", 7], ["v", 10], ["connector", 10], ["v", 10], ["diamond", 10], ["v", 10], ["smile", 10], ["v", 10],
  ["hArrow", 10], ["v", 10], ["flow", 10], ["v", 10], ["callout", 10], ["v", 10], ["star", 10], ["v", 10], ["|", 10],
  ["polygon", 7], ["glue", 11], ["|", 7], ["fontwork", 8], ["image", 9], ["gallery", 9], ["|", 8], ["extrude", 8],
  [":", 13], ["table", 11], ["v", 10], ["|", 10], ["borders", 8], ["v", 9], ["lineColor", 10], ["v", 10], ["|", 10],
  ["borderStyle", 8], ["v", 9],
];
const loc = [
  ["Função", "Otimista", "Mais provável", "Pessimista", "LOC Esperado"],
  ["IHM", "2000", "3000", "3100", "2850"],
  ["AGB", "2000", "3500", "6000", "3666"],
  ["AGT", "2500", "3200", "5800", "3516"],
  ["GBD", "5000", "6000", "7000'", "6000"],
  ["FDG", "3000", "4000", "5000", "4000"],
  ["CP", "3500", "5000", "7000", "6416"],
  ["AP", "2500", "3000", "4000", "3083"],
];
const headWidths = [47, 51, 85, 67, 92];
const cellWidths = { IHM: 25, AGB: 29, AGT: 29, GBD: 30, FDG: 30, CP: 18, AP: 18, "7000'": 34 };
const effort = [
  ["", "Análise\nRequisito", "Projeto(PM)", "Código(PM)", "Teste(PM)", "Total"],
  ["IHM", "5", "3", "2", "3", "11"],
  ["AGB", "10", "10", "10", "10", "14"],
  ["AGT", "10", "10", "10", "10", "40"],
  ["GBD", "4", "5", "3'", "2", "14"],
  ["FDG", "5", "2", "3", "3", "13"],
  ["CP", "3", "5", "3", "2", "13"],
];
const concept = [
  "A Engenharia de Software é composta de diversos",
  "conceitos de fundamental importância na área e abrange",
  "um processo, um conjunto de métodos ou práticas e",
  "diversas ferramentas que possibilitam aos profissionais",
  "desenvolverem software de alta qualidade.",
];
const rowColor = (r) => (r === 0 ? "#b2b2b2" : r % 2 ? "#cbcbcb" : "#e6e6e6");
const tabs = [["Outline", 63, 48], ["Notes", 56, 40], ["Handout", 72, 57], ["Slide Sorter", 94, 78]];

/* ---------- pieces ---------- */
function Slides() {
  return (
    <List>
      <Item>
        <Num>2</Num>
        <Mini>
          <MiniTitle $mt={6} $h={37} $pr={16}><Fit w={48}>Conceito</Fit></MiniTitle>
          <MiniText>
            {concept.map((t, i) => <JustLine key={t} $last={i === 4}>{i === 4 ? <Fit w={148}>{t}</Fit> : t}</JustLine>)}
          </MiniText>
        </Mini>
      </Item>
      <Item $on>
        <Num $on>3</Num>
        <Mini>
          <MiniTitle $mt={6} $h={29} $pr={18}><Fit w={85}>Estimativa LOC</Fit></MiniTitle>
          <MiniGrid $n={5} $cw={43.2} $rh={14} $first={14} $ml={4}>
            {loc.flatMap((r, i) => r.map((c, j) => <MiniCell key={i + "-" + j} $bg={rowColor(i)}>{c}</MiniCell>))}
          </MiniGrid>
          <MiniTotal>Total = 29531</MiniTotal>
        </Mini>
      </Item>
      <Item>
        <Num>4</Num>
        <Mini>
          <MiniTitle $mt={-1} $h={16} $pr={8}><Fit w={40}>Esforço</Fit></MiniTitle>
          <MiniGrid $n={6} $cw={36} $rh={12} $first={18} $ml={3}>
            {effort.flatMap((r, i) => r.map((c, j) => <MiniCell key={i + "-" + j} $bg={rowColor(i)} $red={i > 0 && j === 5}>{c}</MiniCell>))}
          </MiniGrid>
        </Mini>
      </Item>
    </List>
  );
}

function StatusBar() {
  return (
    <Status>
      <Field $w={400} />
      <Field $w={214} $pl={10} $gap={7} $plain>
        <Svg s={14}>
          <path d="M4.500 0v8M0 3.500h8" stroke="#1515d0" strokeWidth="1" />
          <path d="M5.500 4.500h8v6h-8z" stroke="#222" strokeDasharray="1 1" />
        </Svg>
        <Fit w={79}>15,60 / 12,27</Fit>
      </Field>
      <Field $w={200} $gap={6}>
        <Svg s={14}>
          <path d="M5.500 4.500h8v6h-8z" stroke="#222" strokeDasharray="1 1" />
          <path d="M5 1.500h8M1.500 5v6M6.500 0v3M12.500 0v3M0 5.500h3M0 10.500h3" stroke="#222" strokeDasharray="1.500 1" />
        </Svg>
        <Fit w={66}>0,00 x 0,00</Fit>
      </Field>
      <Field $w={23} $pl={6}>
        <Svg s={13}>
          <path d="M9.500 3V.500h-8v11h8V9" stroke="#8a8a8a" />
          <path d="M4 6l2.500 2.500L12 3" stroke="#8a8a8a" strokeWidth="1.300" />
        </Svg>
      </Field>
      <Field $w={30} />
      <Field $w={69} $pl={12}><Fit w={55}>Slide 3 / 9</Fit></Field>
      <Field $w={221} $pl={9}><Fit w={39}>Default</Fit></Field>
      <Field $w={23} $pl={5}>
        <Svg s={13}>
          <path d="M6.500 1v11M1 6.500h11" stroke="#222" strokeWidth="1.600" />
          <path d="M6.500 0L9 3H4zM6.500 13L9 10H4zM0 6.500L3 4v5zM13 6.500L10 4v5z" fill="#222" />
        </Svg>
      </Field>
      <Field $w={144} $pl={9}>
        <Svg s={128} h={12}>
          <path d="M1 6h8M119 6h8M123 2v8" stroke="#8f8f8f" strokeWidth="2" />
          <path d="M15 6h98" stroke="#ababab" strokeWidth="2" />
          <path d="M63 1v10" stroke="#ababab" strokeWidth="1.500" />
          <circle cx="42" cy="6" r="4" fill="#fff" stroke="#8a8a8a" strokeWidth="1.200" />
        </Svg>
      </Field>
      <Field $w={42} $pl={8} $plain><Fit w={24}>58%</Fit></Field>
    </Status>
  );
}

export default function App() {
  return (
    <Screen>
      <Global />
      <Defs />
      <TopBar>
        <TopLeft>
          <Fit w={71}>Atividades</Fit>
          <AppIcon width="38" height="27" viewBox="0 0 38 27">
            <defs>
              <linearGradient id="fadeout" x1="0" y1="0" x2="1" y2="0">
                <stop offset="0" stopColor="#000" stopOpacity="0" />
                <stop offset="1" stopColor="#000" />
              </linearGradient>
            </defs>
            <path d="M0 0h31l5 8v18H0z" fill="#e8e8e8" />
            <path d="M0 0h3v26H0z" fill="#8a3409" />
            <rect x="8.500" y="8.500" width="20" height="18" fill="#f8dcc8" stroke="#c4510f" />
            <path d="M10 11.500h17" stroke="#d0661f" strokeWidth="2" />
            <path d="M11 15.500h4M11 18.500h4M11 21.500h4M17 15.500h10M17 18.500h10M17 21.500h10" stroke="#b04a12" strokeWidth="1.500" />
            <rect x="16" y="0" width="22" height="27" fill="url(#fadeout)" />
          </AppIcon>
          <AppName w={133}>LibreOffice Impress</AppName>
          <DownMark $ml={5} />
        </TopLeft>
        <Fit w={74}>Qua 19:10</Fit>
        <TopRight>
          <Svg s={14} h={14}>
            <path d="M1 5c4-4 8-4 12 0" stroke="#555" strokeWidth="1.800" />
            <path d="M3 7.500c2.500-2.500 5.500-2.500 8 0M4.800 10c1.500-1.500 3-1.500 4.400 0" stroke="#d6d6d6" strokeWidth="1.600" />
            <circle cx="7" cy="12" r="1.500" fill="#d6d6d6" />
          </Svg>
          <Svg s={16} h={14}>
            <path d="M1 4.500h3L8 1v12L4 9.500H1z" fill="#d6d6d6" />
            <path d="M10 4.500c1 1.500 1 3.500 0 5" stroke="#d6d6d6" strokeWidth="1.400" />
            <path d="M12 3c2 2.500 2 5.500 0 8M13.500 1.500c2.500 3 2.500 8 0 11" stroke="#777" strokeWidth="1.200" />
          </Svg>
          <Svg s={14} h={17}>
            <path d="M4 3V1h5v2h2v4M2 2v14h5M2 3h3M8 3h3" stroke="#d6d6d6" strokeWidth="1.800" />
            <path d="M4 6.500h5M4 9h4M4 11.500h3" stroke="#d6d6d6" strokeWidth="1.400" />
            <path d="M11 7l-4 5h2.500L8 16.500l5-5.500h-2.500z" fill="#d6d6d6" />
          </Svg>
          <DownMark />
        </TopRight>
      </TopBar>

      <Window>
        <TitleBar>
          <span />
          <Fit w={245}>trabalhoup.odp – LibreOffice Impress</Fit>
          <CloseCell $pr={17}><Cross color="#4d6067" /></CloseCell>
        </TitleBar>
        <MenuBar>
          {menus.map(([a, k, b, w]) => (
            <Fit key={k + b} w={w}>{a}<u>{k}</u>{b}</Fit>
          ))}
          <CloseCell $pr={8}><Cross color="#3b3b3b" /></CloseCell>
        </MenuBar>
        <Toolbar $h={36}><Tools items={standard} /></Toolbar>
        <Toolbar $h={41}>
          <Grip />
          <Entry $w={148} $g={9}><Fit w={102}>Liberation Sans</Fit></Entry>
          <Combo $w={21} $g={2} $center><Chevron /></Combo>
          <Divider $g={4} />
          <Entry $w={43} $g={5}><Fit w={19}>18</Fit></Entry>
          <Combo $w={21} $g={2} $center><Chevron /></Combo>
          <Tools items={formatting} />
        </Toolbar>

        <Main>
          <SlidePanel>
            <PanelBody>
              <PanelHead><Fit w={41}>Slides</Fit><Cross color="#3b3b3b" /></PanelHead>
              <ListFrame>
                <Slides />
                <Track $top={58}><Thumb $h={135} /></Track>
              </ListFrame>
            </PanelBody>
            <Splitter><SplitDots /></Splitter>
          </SlidePanel>

          <Center>
            <Tabs>
              <Tab $w={64} $on><Fit w={49}>Normal</Fit></Tab>
              {tabs.map(([t, w, tw]) => <Tab key={t} $w={w}><Fit w={tw}>{t}</Fit></Tab>)}
            </Tabs>
            <Work>
              <Canvas>
                <Slide>
                  <SlideTitle><Fit w={238}>Estimativa LOC</Fit></SlideTitle>
                  <SlideGrid>
                    {loc.flatMap((r, i) => r.map((c, j) => (
                      <Cell key={i + "-" + j} $bg={rowColor(i)} $tight={i % 2 === 1}>
                        <Fit w={i === 0 ? headWidths[j] : cellWidths[c] || 31}>{c}</Fit>
                      </Cell>
                    )))}
                  </SlideGrid>
                  <SlideTotal><Fit w={84}>Total = 29531</Fit></SlideTotal>
                </Slide>
              </Canvas>
              <Track $top={139}><Thumb $h={239} /></Track>
            </Work>
            <HTrack><Thumb $w={551} /></HTrack>
          </Center>

          <SideBar>
            <Splitter><SplitDots /></Splitter>
            <Deck>
              <DeckSlot $h={21}>
                <Svg s={12}>
                  <path d="M2 2h6M2 4.500h6M2 7h6" stroke="#2d3a4d" strokeWidth="1.200" />
                  <path d="M6 8h6L9 11z" fill="#111c2e" />
                </Svg>
              </DeckSlot>
              <DeckRule />
              <DeckSlot $h={32} $on><Svg>{icons.wrench}</Svg></DeckSlot>
              {["custom", "favorite", "transition", "tools", "gallery", "compass"].map((n) => (
                <DeckSlot key={n}><Svg>{icons[n]}</Svg></DeckSlot>
              ))}
            </Deck>
          </SideBar>
        </Main>

        <Toolbar $h={39} $pb={2}>
          <Tools items={drawing} />
          <Combo $w={90} $g={8} $h={26}><Fit w={36}>Color</Fit><Chevron /></Combo>
          <Combo $w={136} $g={2} $h={26}><Swatch /><Fit w={64}>Tango: Sk</Fit><Chevron /></Combo>
          <Divider $g={8} />
          <More>»</More>
        </Toolbar>
        <StatusBar />
      </Window>
    </Screen>
  );
}
